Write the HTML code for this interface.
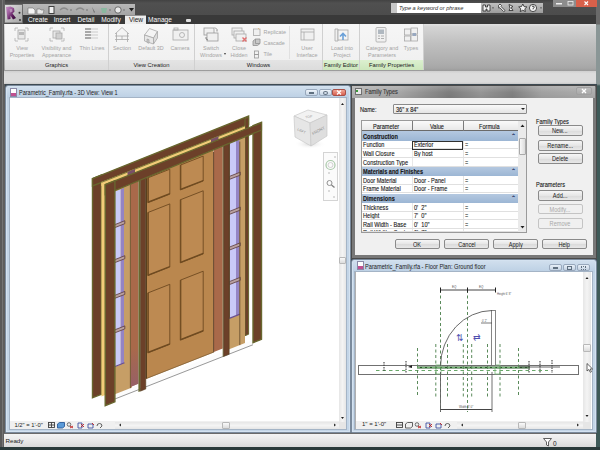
<!DOCTYPE html>
<html><head><meta charset="utf-8">
<style>
*{margin:0;padding:0;box-sizing:border-box}
html,body{width:600px;height:450px;overflow:hidden;background:#3a3a3a;font-family:"Liberation Sans",sans-serif}
.a{position:absolute}
#lstrip{left:0;top:0;width:5px;height:450px;background:linear-gradient(90deg,#5a5a5a 0,#5a5a5a 1.8px,#747474 1.8px,#747474 3.5px,#5e5e5e 3.5px)}
#rstrip{left:596px;top:0;width:4px;height:450px;background:linear-gradient(#6a6a6a 0,#6a6a6a 24px,#8a9696 25px,#8a9696 84px,#3e5a58 86px,#3e5a58 100%)}
#title{left:0;top:0;width:600px;height:15px;background:linear-gradient(#424242,#505050 20%,#4c4c4c)}
#qat{left:23px;top:4px;width:112px;height:11px;background:linear-gradient(#b8b8b8,#a4a4a4)}
#appbtn{left:4px;top:4px;width:19px;height:20px;background:linear-gradient(135deg,#d0d0d0,#8a8a8a);border:1px solid #606060}
#tabs{left:4px;top:15px;width:592px;height:9px;background:#393939}
.tab{position:absolute;top:15px;height:9px;font-size:6.6px;line-height:9.5px;color:#f8f8f8;text-align:center;white-space:nowrap}
#ribbon{left:4px;top:24px;width:592px;height:47px;background:linear-gradient(#e2e2e2 0,#d4d4d4 6%,#c0c0c0 40%,#acacac 85%,#a6a6a6 94%,#9a9a9a 100%)}
.panel{position:absolute;top:24px;height:46px;background:linear-gradient(#f6f6f6,#efefef);border-right:1px solid #d0d0d0}
.plabel{position:absolute;left:0;right:0;top:36px;height:10px;background:linear-gradient(#e4e4e4,#dcdcdc);font-size:5.8px;line-height:10px;text-align:center;color:#202020}
.plabel.g{background:linear-gradient(#dcf0d0,#cce6bc)}
.bl{position:absolute;top:20.5px;font-size:5.4px;line-height:7.3px;color:#a4a4a4;text-align:center;white-space:nowrap}
#strip{left:4px;top:71px;width:592px;height:13px;background:linear-gradient(#cfcfcf,#dcdcdc 20%,#dcdcdc 85%,#c8c8c8)}
#mdi{left:5px;top:84px;width:592px;height:350px;background:#3e4a52}
.win{position:absolute;background:linear-gradient(#d2e0ee,#bcd0e4 12px,#c2d4e6 13px,#c4d6e8);border:1px solid #7a8a9c;border-radius:3px 3px 0 0;box-shadow:inset 0 0 0 1px #d4e2f0}
.wtitle{position:absolute;z-index:1;left:12.5px;top:2px;font-size:7px;line-height:10px;color:#1a1a1a;white-space:nowrap;transform:scaleX(.79);transform-origin:0 0}
.content{position:absolute;background:#fff;box-shadow:0 0 0 1px #a4b4c6}
#status{left:4px;top:433px;width:592px;height:14px;background:linear-gradient(#f4f4f4,#e6e6e6 60%,#dadada);font-size:6.2px;line-height:14.5px;color:#202020;padding-left:1.5px;border-top:1px solid #6a6a6a}
#bottom{left:0;top:447px;width:600px;height:3px;background:#2a3a3a}
</style></head><body>
<div class="a" id="title"></div>
<div class="a" id="lstrip"></div>
<div class="a" id="rstrip"></div>
<div class="a" id="qat"></div>
<div class="a" id="appbtn"></div>
<div class="a" id="tabs"></div>
<div class="a" id="ribbon"></div>

<!-- QAT icons -->
<svg class="a" style="left:0;top:0" width="600" height="26">
  <defs><linearGradient id="ab" x1="0" y1="0" x2="1" y2="1"><stop offset="0" stop-color="#e0e0e0"/><stop offset="1" stop-color="#a4a4a4"/></linearGradient>
  <linearGradient id="rl" x1="0" y1="0" x2="1" y2="1"><stop offset="0" stop-color="#c890c8"/><stop offset=".4" stop-color="#9a5a9a"/><stop offset=".7" stop-color="#5a1a5a"/><stop offset="1" stop-color="#2a0a2a"/></linearGradient></defs>
  <rect x="4.5" y="4.5" width="18" height="18.5" fill="url(#ab)" stroke="#6a6a6a"/>
  <path d="M6 7 L10.5 6.5 L14 8 L14.5 11.5 L12.5 13.5 L16 18 L13 19.5 L10.5 15.5 L10.5 19 L7.5 19.5 Z" fill="url(#rl)"/>
  <path d="M9.5 9 L12 9 L12.5 11.5 L10 12.5 Z" fill="#b890b8"/>
  <circle cx="19.5" cy="12.7" r="1" fill="#383838"/><circle cx="20" cy="20" r="1" fill="#383838"/>
  <path d="M28 8h5l2 2v4h-7z" fill="#f4f4f4" stroke="#707070" stroke-width=".6"/>
  <path d="M37 9h3l1 1h3l-1 4h-6z" fill="#e8e8e8" stroke="#707070" stroke-width=".6"/>
  <rect x="49" y="6.5" width="5" height="7" fill="#f0f0f0" stroke="#404040" stroke-width="1"/>
  <path d="M60 10 q4-4 8 0" fill="none" stroke="#8a8a8a" stroke-width="1.3"/>
  <path d="M76 10 q4-4 8 0" fill="none" stroke="#8a8a8a" stroke-width="1.3"/>
  <circle cx="71" cy="10" r=".7" fill="#606060"/><circle cx="87" cy="10" r=".7" fill="#606060"/>
  <path d="M92 7l3 5-1 1z" fill="#707070"/>
  <path d="M101 8h6l-1 5h-4z" fill="#8ab8a0"/><circle cx="110" cy="10" r=".7" fill="#606060"/>
  <circle cx="118" cy="10" r="3.2" fill="#e8e8e8" stroke="#505050" stroke-width=".8"/><circle cx="124" cy="10" r=".7" fill="#606060"/>
  <path d="M129 8h5l-2.5 3.5z" fill="#202020"/>
  <rect x="125" y="15.5" width="21" height="9" fill="#ececec"/>
  <rect x="186" y="19" width="5" height="3" rx="1" fill="#e0e0e0"/>
</svg>
<div class="tab" style="left:28px;width:20px">Create</div>
<div class="tab" style="left:52px;width:20px">Insert</div>
<div class="tab" style="left:76px;width:20px">Detail</div>
<div class="tab" style="left:101px;width:20px">Modify</div>
<div class="tab" style="left:126px;width:20px;color:#222">View</div>
<div class="tab" style="left:148px;width:24px">Manage</div>
<!-- panels -->
<div class="panel" style="left:5px;width:104px"><div class="plabel">Graphics</div>
 <div class="bl" style="left:2px;width:30px">View<br>Properties</div>
 <div class="bl" style="left:31.5px;width:40px">Visibility and<br>Appearance</div>
 <div class="bl" style="left:72px;width:30px">Thin Lines</div>
</div>
<div class="panel" style="left:109px;width:86px"><div class="plabel">View Creation</div>
 <div class="bl" style="left:0px;width:26px">Section</div>
 <div class="bl" style="left:26px;width:32px">Default 3D</div>
 <div class="bl" style="left:58px;width:26px">Camera</div>
</div>
<div class="panel" style="left:195px;width:128px"><div class="plabel">Windows</div>
 <div class="bl" style="left:2px;width:28px">Switch<br>Windows</div>
 <div class="bl" style="left:32px;width:24px">Close<br>Hidden</div>
 <div class="bl" style="left:68.5px;top:3px;text-align:left;line-height:11.2px">Replicate<br>Cascade<br>Tile</div>
 <div class="a" style="left:29px;top:29px;width:0;height:0;border-left:1.5px solid transparent;border-right:1.5px solid transparent;border-top:2px solid #404040"></div>
 <div class="a" style="left:94px;top:2px;width:1px;height:33px;background:#e0e0e0"></div>
 <div class="bl" style="left:97px;width:30px">User<br>Interface</div>
</div>
<div class="panel" style="left:323px;width:37px"><div class="plabel g">Family Editor</div>
 <div class="bl" style="left:2px;width:34px">Load into<br>Project</div>
</div>
<div class="panel" style="left:360px;width:64px"><div class="plabel g">Family Properties</div>
 <div class="bl" style="left:2px;width:40px">Category and<br>Parameters</div>
 <div class="bl" style="left:40px;width:22px">Types</div>
</div>
<svg class="a" style="left:0;top:24px" width="430" height="36" fill="none" stroke="#a8a8a8" stroke-width=".8">
  <!-- view properties -->
  <path d="M15 7v-3h3M25 4h3v3M28 14v3h-3M18 17h-3v-3" stroke="#b0b0b0"/>
  <rect x="18" y="6" width="7" height="9" fill="#e8e8e8"/><rect x="19" y="8" width="5" height="3" fill="#b8b8b8" stroke="none"/>
  <!-- visibility -->
  <path d="M50 7v-3h3M61 4h3v3M64 14v3h-3M53 17h-3v-3" stroke="#b0b0b0"/>
  <rect x="53" y="7" width="7" height="7" fill="#e8e8e8"/><rect x="56" y="9" width="6" height="6" fill="#d0d0d0"/>
  <!-- thin lines -->
  <path d="M85 5h6M85 8h6M85 11h6M85 14h6" stroke="#909090" stroke-width="1.4"/>
  <path d="M91 5h7M91 8h7M91 11h7M91 14h7" stroke="#c0c0c0"/>
  <!-- section -->
  <path d="M115 10l7-6.5 7 6.5M116.5 9v9M127.5 9v9M115 12h14M115 15.5h14M122 12v3.5" />
  <!-- default 3d -->
  <path d="M144.5 11l5-6.5 8 3-4 6.5z" fill="#f4f4f4"/><path d="M144.5 11v6l9 3v-6z" fill="#e8e8e8"/><path d="M153.5 14l4-6.5v6.5l-4 6z" fill="#dcdcdc"/><path d="M147 15v3.5l2 .7v-3.5z" fill="#c8c8c8"/>
  <!-- camera -->
  <rect x="173" y="6" width="15" height="10" fill="#f0f0f0"/><circle cx="182" cy="11" r="2.5"/><rect x="174" y="4" width="4" height="2"/>
  <!-- switch windows -->
  <rect x="204" y="4" width="10" height="7" fill="#f0f0f0" stroke="#989898"/><rect x="207" y="9" width="11" height="8" fill="#f0f0f0" stroke="#989898"/><path d="M215 3.5l2 2v2M206 13v2l2 1" stroke="#707070"/>
  <!-- close hidden -->
  <rect x="232" y="4" width="10" height="7" fill="#f0f0f0"/><rect x="234" y="7" width="10" height="7" fill="#f0f0f0"/><rect x="236" y="10" width="10" height="7" fill="#f0f0f0"/>
  <path d="M242.5 13.5l4 4M246.5 13.5l-4 4" stroke="#e07070" stroke-width="1.4"/>
  <rect x="253.5" y="5" width="6.5" height="6.5" fill="#f0f0f0"/><path d="M258 4l1.5 1.5" stroke="#e0b070"/>
  <path d="M253 17l2.5-2h4.5v4.5l-2.5 2h-4.5z" fill="#c8c8c8" stroke="#909090"/><path d="M255.5 15v4.5h4.5" stroke="#909090"/>
  <rect x="254.5" y="27" width="4" height="3.5" stroke="#989898"/><rect x="254.5" y="30.5" width="4" height="3.5" stroke="#989898"/>
  <!-- UI -->
  <rect x="301" y="5" width="13" height="11" fill="#f0f0f0"/><path d="M301 8h13M304 8v8"/>
  <!-- load into project -->
  <path d="M335 5h3v12h-3z" fill="#f0f0f0"/><rect x="338" y="6" width="10" height="10" fill="#f4f4f4"/><path d="M343 16v-6M340 12.5l3-3 3 3" stroke="#6aa0d8" stroke-width="1.6"/>
  <!-- category -->
  <rect x="376" y="3.5" width="10" height="14.5" rx="1" fill="#f0f0f0"/><rect x="378" y="5.5" width="6" height="4.5" fill="#b0b8c0" stroke="none"/><path d="M378 12h2M381 12h3M378 14.5h2M381 14.5h3" stroke="#a0a0a0"/>
  <!-- types -->
  <rect x="404.5" y="5" width="6" height="6" fill="#f0f0f0"/><rect x="404.5" y="12" width="6" height="5" fill="#f0f0f0"/><rect x="411" y="4" width="6.5" height="6" fill="#f0f0f0"/><rect x="411" y="11" width="6.5" height="6" fill="#f0f0f0"/><rect x="412.5" y="9" width="3.5" height="3" fill="#98a8c0" stroke="none"/>
</svg>
<!-- search -->
<div class="a" style="left:391px;top:3px;width:6px;height:10px;background:#c8c8c8"></div>
<div class="a" style="left:397px;top:3px;width:84px;height:10px;background:#fff;font-size:5.6px;line-height:10px;font-style:italic;color:#303030;padding-left:2px">Type a keyword or phrase</div>
<div class="a" style="left:481px;top:3px;width:62px;height:10px;background:linear-gradient(#c0c0c0,#9c9c9c)"></div>
<svg class="a" style="left:480px;top:0px" width="120" height="16" stroke="#2a2a2a" stroke-width=".8">
  <path d="M3 5h2.5v2h2v-2h2.5v6h-3v-2h-1v2h-3z" fill="#f0f0f0"/>
  <path d="M12 7.5h2l-1 1.2z" fill="#303030" stroke="none"/>
  <path d="M18.5 5.5l1.5-1.5 1.5 1.5-.5 1 4 4-1.2 1.2-4-4-1 .5z" fill="#f4f4f4"/>
  <path d="M29 4.5l4 2-2 1 2 3h-4l1-2z" fill="#f0f0f0"/>
  <path d="M42.8 4l1.3 2.6 2.8.3-2.1 1.9.6 2.8-2.6-1.4-2.6 1.4.6-2.8-2.1-1.9 2.8-.3z" fill="#f4f4f4"/>
  <circle cx="53" cy="8" r="3.6" fill="#f4f4f4"/><path d="M52 6.5q1-1 2 0t-1 2v.8" fill="none" stroke-width=".9"/>
  <path d="M60 7.5h2l-1 1.2z" fill="#303030" stroke="none"/>
  <rect x="73" y="0" width="12" height="7" fill="#8c8c8c" stroke="none"/><rect x="76" y="3" width="6" height="1.5" fill="#f0f0f0" stroke="none"/>
  <rect x="85" y="0" width="11" height="7" fill="#8c8c8c" stroke="none"/><rect x="88" y="1.5" width="5" height="3.5" fill="none" stroke="#f0f0f0"/>
  <rect x="96" y="0" width="21" height="7" fill="#d8604a" stroke="none"/><path d="M104.5 1.5l3.5 3.5M108 1.5l-3.5 3.5" stroke="#fff" stroke-width="1.1"/>
</svg>
<div class="a" id="strip"></div>
<div class="a" id="mdi"></div>
<!-- 3D window -->
<div class="win" style="left:5px;top:85px;width:345.5px;height:348px">
  <div class="wtitle">Parametric_Family.rfa - 3D View: View 1</div>
  <div class="content" style="left:4px;top:12px;width:336px;height:331px"></div>
</div>
<svg class="a" style="left:0;top:0" width="350" height="450"><polygon points="114.00,394.55 253.00,339.92 253.00,344.72 114.00,399.35" fill="#fcfcfc"/><line x1="113.00" y1="399.74" x2="253.00" y2="344.72" stroke="#8c8c8c" stroke-width="0.9"/><polygon points="92.50,178.60 101.40,175.10 101.40,394.30 92.50,397.80" fill="#6c4029" stroke="#68662e" stroke-width="1.4" stroke-linejoin="miter"/><polygon points="92.5,178.6 248.6,116.0 248.6,124.65 92.5,186.0" fill="#6c4029" stroke="#68662e" stroke-width="1.4"/><polygon points="245.00,118.67 248.60,117.25 248.60,334.25 245.00,335.67" fill="#6c4029" stroke="#68662e" stroke-width="1.0" stroke-linejoin="miter"/><polygon points="101.40,182.50 105.20,181.01 105.20,395.01 101.40,396.50" fill="#f2cc78"/><polygon points="101.40,182.10 245.00,125.67 245.00,129.67 101.40,186.10" fill="#f2cc78"/><line x1="101.40" y1="182.40" x2="245.00" y2="125.97" stroke="#68662e" stroke-width="0.8"/><polygon points="127.50,172.05 135.00,169.10 135.00,172.90 127.50,175.84" fill="#7a5068"/><polygon points="211.00,139.23 218.50,136.28 218.50,140.08 211.00,143.03" fill="#7a5068"/><polygon points="114.90,187.20 132.00,180.48 132.00,387.48 114.90,394.20" fill="#c69e66"/><polygon points="228.00,142.75 245.00,136.07 245.00,343.07 228.00,349.75" fill="#c69e66"/><polygon points="114.90,191.50 120.80,189.18 120.80,364.38 114.90,366.70" fill="#c9c9f7"/><polygon points="120.80,189.18 124.00,187.92 124.00,363.12 120.80,364.38" fill="#9484c4"/><polygon points="114.40,224.79 124.80,220.71 124.80,223.71 114.40,227.79" fill="#b8a0a0" stroke="#5a3a3a" stroke-width="0.8" stroke-linejoin="miter"/><polygon points="114.40,259.79 124.80,255.71 124.80,258.71 114.40,262.79" fill="#b8a0a0" stroke="#5a3a3a" stroke-width="0.8" stroke-linejoin="miter"/><polygon points="114.40,295.49 124.80,291.41 124.80,294.41 114.40,298.49" fill="#b8a0a0" stroke="#5a3a3a" stroke-width="0.8" stroke-linejoin="miter"/><polygon points="114.40,329.99 124.80,325.91 124.80,328.91 114.40,332.99" fill="#b8a0a0" stroke="#5a3a3a" stroke-width="0.8" stroke-linejoin="miter"/><line x1="114.50" y1="191.65" x2="114.50" y2="366.85" stroke="#5a4a3a" stroke-width="0.9"/><line x1="114.40" y1="366.69" x2="124.50" y2="362.72" stroke="#6a5090" stroke-width="1.2"/><polygon points="229.80,143.14 236.00,140.70 236.00,315.90 229.80,318.34" fill="#c9c9f7"/><polygon points="236.00,140.70 239.50,139.33 239.50,314.53 236.00,315.90" fill="#9484c4"/><polygon points="229.30,176.44 240.30,172.11 240.30,175.11 229.30,179.44" fill="#b8a0a0" stroke="#5a3a3a" stroke-width="0.8" stroke-linejoin="miter"/><polygon points="229.30,211.44 240.30,207.11 240.30,210.11 229.30,214.44" fill="#b8a0a0" stroke="#5a3a3a" stroke-width="0.8" stroke-linejoin="miter"/><polygon points="229.30,247.14 240.30,242.81 240.30,245.81 229.30,250.14" fill="#b8a0a0" stroke="#5a3a3a" stroke-width="0.8" stroke-linejoin="miter"/><polygon points="229.30,281.64 240.30,277.31 240.30,280.31 229.30,284.64" fill="#b8a0a0" stroke="#5a3a3a" stroke-width="0.8" stroke-linejoin="miter"/><line x1="229.40" y1="143.30" x2="229.40" y2="318.50" stroke="#5a4a3a" stroke-width="0.9"/><line x1="229.30" y1="318.34" x2="240.00" y2="314.13" stroke="#6a5090" stroke-width="1.2"/><line x1="130.40" y1="184.61" x2="130.40" y2="388.11" stroke="#6a5030" stroke-width="0.9"/><line x1="239.80" y1="141.61" x2="239.80" y2="345.11" stroke="#6a5030" stroke-width="0.9"/><polygon points="146.00,175.97 213.50,149.45 213.50,352.45 146.00,378.97" fill="#ba874e"/><polygon points="147.80,177.87 169.80,169.22 169.80,194.12 147.80,202.77" fill="#bd8a52" stroke="#6e4a20" stroke-width="0.9" stroke-linejoin="miter"/><line x1="148.00" y1="202.19" x2="169.80" y2="193.62" stroke="#6e4a20" stroke-width="1.3"/><line x1="148.30" y1="177.67" x2="148.30" y2="202.57" stroke="#6e4a20" stroke-width="1.1"/><polygon points="147.80,212.57 169.80,203.92 169.80,267.02 147.80,275.67" fill="#bd8a52" stroke="#6e4a20" stroke-width="0.9" stroke-linejoin="miter"/><line x1="148.00" y1="275.09" x2="169.80" y2="266.52" stroke="#6e4a20" stroke-width="1.3"/><line x1="148.30" y1="212.37" x2="148.30" y2="275.47" stroke="#6e4a20" stroke-width="1.1"/><polygon points="147.80,292.97 169.80,284.32 169.80,344.32 147.80,352.97" fill="#bd8a52" stroke="#6e4a20" stroke-width="0.9" stroke-linejoin="miter"/><line x1="148.00" y1="352.39" x2="169.80" y2="343.82" stroke="#6e4a20" stroke-width="1.3"/><line x1="148.30" y1="292.77" x2="148.30" y2="352.77" stroke="#6e4a20" stroke-width="1.1"/><polygon points="180.30,165.09 203.20,156.09 203.20,180.99 180.30,189.99" fill="#bd8a52" stroke="#6e4a20" stroke-width="0.9" stroke-linejoin="miter"/><line x1="180.50" y1="189.42" x2="203.20" y2="180.49" stroke="#6e4a20" stroke-width="1.3"/><line x1="180.80" y1="164.90" x2="180.80" y2="189.80" stroke="#6e4a20" stroke-width="1.1"/><polygon points="180.30,199.79 203.20,190.79 203.20,253.89 180.30,262.89" fill="#bd8a52" stroke="#6e4a20" stroke-width="0.9" stroke-linejoin="miter"/><line x1="180.50" y1="262.32" x2="203.20" y2="253.39" stroke="#6e4a20" stroke-width="1.3"/><line x1="180.80" y1="199.60" x2="180.80" y2="262.70" stroke="#6e4a20" stroke-width="1.1"/><polygon points="180.30,280.19 203.20,271.19 203.20,331.19 180.30,340.19" fill="#bd8a52" stroke="#6e4a20" stroke-width="0.9" stroke-linejoin="miter"/><line x1="180.50" y1="339.62" x2="203.20" y2="330.69" stroke="#6e4a20" stroke-width="1.3"/><line x1="180.80" y1="280.00" x2="180.80" y2="340.00" stroke="#6e4a20" stroke-width="1.1"/><polygon points="131.00,181.87 138.40,178.96 138.40,383.76 131.00,386.67" fill="#a9694a"/><polygon points="138.40,178.96 140.50,178.14 140.50,391.14 138.40,391.96" fill="#68662e"/><polygon points="140.50,178.14 145.80,176.05 145.80,389.05 140.50,391.14" fill="#6c4029" stroke="#4e3a1c" stroke-width="0.5" stroke-linejoin="miter"/><polygon points="213.80,149.33 222.70,145.83 222.70,348.53 213.80,352.03" fill="#a9694a"/><polygon points="222.70,145.83 223.60,145.48 223.60,356.48 222.70,356.83" fill="#68662e"/><polygon points="223.60,145.48 229.20,143.28 229.20,354.28 223.60,356.48" fill="#6c4029" stroke="#4e3a1c" stroke-width="0.5" stroke-linejoin="miter"/><polygon points="253.00,125.72 261.50,122.38 261.50,339.38 253.00,342.72" fill="#6c4029" stroke="#68662e" stroke-width="1.4" stroke-linejoin="miter"/><polygon points="105.2,184.6 261.5,122.8 261.5,130.0 105.2,194.5" fill="#6c4029" stroke="#68662e" stroke-width="1.2"/><polygon points="105.20,184.61 114.90,180.80 114.90,401.80 105.20,405.61" fill="#6c4029" stroke="#68662e" stroke-width="1.4" stroke-linejoin="miter"/><defs><linearGradient id="pt" x1="0" y1="0" x2="0" y2="1"><stop offset="0" stop-color="#8a5a7a" stop-opacity="0"/><stop offset="1" stop-color="#8a5a7a" stop-opacity=".6"/></linearGradient></defs><polygon points="131.00,349.87 138.40,346.96 138.40,383.76 131.00,386.67" fill="url(#pt)"/><line x1="146.30" y1="378.86" x2="146.30" y2="178.36" stroke="#4a3418" stroke-width="1.1"/><line x1="213.60" y1="352.41" x2="213.60" y2="151.91" stroke="#5a3c20" stroke-width="0.9"/><line x1="146.00" y1="378.67" x2="213.50" y2="352.15" stroke="#7a5a30" stroke-width="0.7"/></svg>
<div class="a" style="left:10px;top:88px;width:7px;height:9px;background:#fff;border:1px solid #8a8aa8"></div>
<div class="a" style="left:11px;top:93px;width:5px;height:3px;background:#c05090"></div>
<div class="a" style="left:305px;top:89px;width:13px;height:7px;border-radius:2px;background:linear-gradient(#eef4fa,#c8d6e6);border:1px solid #98a8bc"></div>
<div class="a" style="left:309px;top:92px;width:5px;height:2px;background:#fff;border:1px solid #607080"></div>
<div class="a" style="left:319px;top:89px;width:13px;height:7px;border-radius:2px;background:linear-gradient(#eef4fa,#c8d6e6);border:1px solid #98a8bc"></div>
<div class="a" style="left:323px;top:90.5px;width:5px;height:4px;border-radius:50%;border:1px solid #607080"></div>
<div class="a" style="left:332px;top:89px;width:14px;height:7px;border-radius:2px;background:linear-gradient(#f0a898,#d86050);border:1px solid #a85048"></div>
<svg class="a" style="left:332px;top:89px" width="14" height="8"><path d="M5 1.5l4 4M9 1.5l-4 4" stroke="#fff" stroke-width="1.3"/></svg>
<!-- scrollbars -->
<div class="a" style="left:339px;top:98px;width:7px;height:324px;background:linear-gradient(90deg,#e6e6e6,#f4f4f4,#e6e6e6)"></div>
<div class="a" style="left:339px;top:257px;width:7px;height:7px;background:linear-gradient(#fafafa,#dcdcdc);border:1px solid #b8b8b8;border-radius:1px"></div>
<svg class="a" style="left:339px;top:99px" width="7" height="324"><path d="M2 6h3l-1.5-2z" fill="#202020"/><path d="M2 318h3l-1.5 2z" fill="#202020"/></svg>
<div class="a" style="left:10px;top:421px;width:329px;height:8px;background:#f0f0f0"></div>
<div class="a" style="left:115px;top:422px;width:224px;height:7px;background:linear-gradient(#e6e6e6,#f4f4f4,#e6e6e6)"></div>
<div class="a" style="left:222px;top:422px;width:8px;height:7px;background:linear-gradient(#fafafa,#dcdcdc);border:1px solid #b8b8b8;border-radius:1px"></div>
<svg class="a" style="left:110px;top:421px" width="230" height="8"><path d="M9 4l2-1.5v3z" fill="#303030"/><path d="M224 2.5v3l2-1.5z" fill="#303030"/></svg>
<div class="a" style="left:14.5px;top:421px;font-size:5.8px;line-height:9px;color:#202020;white-space:nowrap">1/2" = 1'-0"</div>
<svg class="a" style="left:46px;top:421px" width="60" height="8" stroke-width=".9" fill="none">
  <rect x="2.5" y="1.5" width="6" height="5" stroke="#404040"/><path d="M2.5 4h6M5.5 1.5v5" stroke="#404040"/>
  <path d="M11.5 3l2-1.5h5v4l-2 1.5h-5z" fill="#5a9ad8" stroke="#2a5a98"/>
  <circle cx="23" cy="3.5" r="1.8" stroke="#606060"/><path d="M24 5l3 2M27 5l-3 2" stroke="#c02020"/>
  <path d="M32 2h4v5h-4z" stroke="#4050a0"/><path d="M35 3l3 3M38 3l-3 3" stroke="#c02020"/>
  <path d="M42 3h5v4h-5z" stroke="#4050a0"/><path d="M46 2l2 2" stroke="#c02020"/>
  <path d="M51 5a2.5 2.5 0 1 1 5 0l-2 2" stroke="#505050"/>
</svg>
<!-- viewcube -->
<svg class="a" style="left:288px;top:104px" width="48" height="48">
  <defs><radialGradient id="cs" cx=".5" cy=".5" r=".5"><stop offset="0" stop-color="#d8d8d8"/><stop offset="1" stop-color="#fff" stop-opacity="0"/></radialGradient></defs>
  <ellipse cx="22" cy="40" rx="16" ry="5" fill="url(#cs)"/>
  <path d="M6 12 L20 6 L39 11 L22 19 Z" fill="#f2f2f2" stroke="#c8c8c8" stroke-width=".7"/>
  <path d="M6 12 L22 19 L23 42 L7 33 Z" fill="#e6e6e6" stroke="#c8c8c8" stroke-width=".7"/>
  <path d="M22 19 L39 11 L39 32 L23 42 Z" fill="#dedede" stroke="#c8c8c8" stroke-width=".7"/>
  <text x="21" y="14" font-size="3.5" fill="#9a9a9a" text-anchor="middle" transform="rotate(-10 21 14)">TOP</text>
  <text x="13" y="28" font-size="3.5" fill="#8a8a8a" text-anchor="middle" transform="rotate(25 13 28)">LEFT</text>
  <text x="31" y="28" font-size="4" fill="#8a8a8a" text-anchor="middle" transform="rotate(-28 31 28)">FRONT</text>
</svg>
<!-- nav bar -->
<div class="a" style="left:323px;top:152px;width:15px;height:49px;border:1px solid #d4d4d4;background:#fbfbfb"></div>
<svg class="a" style="left:323px;top:152px" width="15" height="50" fill="none">
  <circle cx="7.5" cy="13" r="4.5" stroke="#a8c8a8" stroke-width="1.2"/><circle cx="7.5" cy="13" r="2.5" stroke="#c8c8c8" stroke-width=".8"/>
  <circle cx="12" cy="5" r=".7" fill="#a0a0a0"/><circle cx="6" cy="21" r=".7" fill="#a0a0a0"/>
  <circle cx="6.5" cy="31" r="2.5" stroke="#909090" stroke-width="1"/><path d="M8.5 33l3 2.5" stroke="#808080" stroke-width="1.3"/>
  <circle cx="6" cy="39" r=".7" fill="#a0a0a0"/><circle cx="11" cy="45" r=".7" fill="#a0a0a0"/>
</svg>
<div class="a" style="left:339px;top:422px;width:7px;height:7px;background:#e6e6e6"></div>

<!-- dialog -->
<div class="a" style="left:351px;top:84.5px;width:245.5px;height:174px;background:#787878;border:1px solid #4a4a4a;border-radius:2px 2px 0 0">
  <div class="a" style="left:3px;top:12.5px;width:237.5px;height:157px;background:#f0f0f0"></div>
</div>
<style>
.dt{position:absolute;font-size:7px;line-height:9px;color:#101010;white-space:nowrap;transform:scaleX(.8);transform-origin:0 0;-webkit-text-stroke:.12px #303030}
.db{position:absolute;height:11px;border:1px solid #8a8a8a;border-radius:2px;background:linear-gradient(#f6f6f6,#e6e6e6 50%,#dadada 51%,#e8e8e8);font-size:7px;line-height:9px;text-align:center;color:#1a1a1a}
.db span{display:inline-block;transform:scaleX(.8)}
.db.dis{color:#a8a8a8;border-color:#c4c4c4;background:#f0f0f0}
</style>
<div class="a" style="left:352px;top:85.5px;width:243px;height:12.5px;background:linear-gradient(rgba(255,255,255,.18),rgba(255,255,255,0) 50%,rgba(0,0,0,.05)),linear-gradient(90deg,#b2b2b2 0,#a6a6a6 20%,#7e7e7e 40%,#969696 53%,#828282 66%,#a2a2a2 78%,#adadad 100%)"></div>
<div class="a" style="left:355px;top:88px;width:7px;height:7px;background:#e8e8e8;border:1px solid #707070"></div>
<div class="a" style="left:356px;top:90px;width:2px;height:2px;background:#3a9a3a"></div>
<div class="dt" style="left:365px;top:87px;color:#3a3a3a">Family Types</div>
<div class="a" style="left:576px;top:87px;width:16px;height:8px;border-radius:2px;background:linear-gradient(#bcbcbc,#a8a8a8);border:1px solid #a0a0a0"></div>
<svg class="a" style="left:576px;top:87px" width="16" height="9"><path d="M6 2l4 4M10 2l-4 4" stroke="#fff" stroke-width="1.4"/></svg>
<div class="a" style="left:355px;top:98px;width:237px;height:156px;background:#f0f0f0"></div>
<div class="dt" style="left:360px;top:104.5px">Name:</div>
<div class="a" style="left:393px;top:104px;width:134px;height:10px;background:linear-gradient(#fafafa,#e4e4e4);border:1px solid #8a8a8a;border-radius:1px"></div>
<div class="dt" style="left:396px;top:104.5px">36" x 84"</div>
<svg class="a" style="left:519px;top:105px" width="8" height="8"><path d="M2 3h4l-2 2z" fill="#202020"/></svg>
<div class="a" style="left:361px;top:120px;width:166px;height:113px;background:#fff;border:1px solid #9a9a9a"></div>
<div class="a" style="left:362px;top:121px;width:156px;height:10px;background:linear-gradient(#fafafa,#e8e8e8);border-bottom:1px solid #6a6a6a"></div>
<div class="a" style="left:411.5px;top:121px;width:1px;height:10px;background:#7a7a7a"></div>
<div class="a" style="left:462.5px;top:121px;width:1px;height:10px;background:#7a7a7a"></div>
<div class="a" style="left:517.5px;top:121px;width:1px;height:10px;background:#7a7a7a"></div>
<div class="dt" style="left:373px;top:121.5px">Parameter</div>
<div class="dt" style="left:430px;top:121.5px">Value</div>
<div class="dt" style="left:479px;top:121.5px">Formula</div>
<div class="a" style="left:518px;top:121px;width:8px;height:111px;background:#eaeaea"></div>
<div class="a" style="left:519px;top:138px;width:7px;height:17px;background:linear-gradient(90deg,#f8f8f8,#dcdcdc);border:1px solid #aaa;border-radius:1px"></div>
<svg class="a" style="left:518px;top:121px" width="9" height="112"><path d="M2.5 6h4l-2-2.5z" fill="#202020"/><path d="M2.5 105h4l-2 2.5z" fill="#202020"/></svg>
<div class="a" style="left:362px;top:131.3px;width:156px;height:9.6px;background:linear-gradient(#b4c8e0,#9cb6d4);overflow:hidden"><div class="dt" style="left:1px;top:0.3px;font-weight:bold">Construction</div></div>
<div class="a" style="left:511px;top:132.8px;font-size:6px;line-height:6px;color:#203060;font-weight:bold">&#8963;</div>
<div class="a" style="left:362px;top:140.9px;width:156px;height:8.6px;border-bottom:1px solid #e0e0e0;overflow:hidden"><div class="dt" style="left:1px;top:-0.5px">Function</div><div class="dt" style="left:52px;top:-0.5px">Exterior</div><div class="dt" style="left:103px;top:-0.5px">=</div><div class="a" style="left:49.5px;top:0;width:1px;height:9px;background:#e8e8e8"></div><div class="a" style="left:100.5px;top:0;width:1px;height:9px;background:#e4e4e4"></div></div>
<div class="a" style="left:362px;top:149.5px;width:156px;height:8.6px;border-bottom:1px solid #e0e0e0;overflow:hidden"><div class="dt" style="left:1px;top:-0.5px">Wall Closure</div><div class="dt" style="left:52px;top:-0.5px">By host</div><div class="dt" style="left:103px;top:-0.5px">=</div><div class="a" style="left:49.5px;top:0;width:1px;height:9px;background:#e8e8e8"></div><div class="a" style="left:100.5px;top:0;width:1px;height:9px;background:#e4e4e4"></div></div>
<div class="a" style="left:362px;top:158.1px;width:156px;height:8.6px;border-bottom:1px solid #e0e0e0;overflow:hidden"><div class="dt" style="left:1px;top:-0.5px">Construction Type</div><div class="dt" style="left:52px;top:-0.5px"></div><div class="dt" style="left:103px;top:-0.5px">=</div><div class="a" style="left:49.5px;top:0;width:1px;height:9px;background:#e8e8e8"></div><div class="a" style="left:100.5px;top:0;width:1px;height:9px;background:#e4e4e4"></div></div>
<div class="a" style="left:362px;top:166.7px;width:156px;height:9.6px;background:linear-gradient(#b4c8e0,#9cb6d4);overflow:hidden"><div class="dt" style="left:1px;top:0.3px;font-weight:bold">Materials and Finishes</div></div>
<div class="a" style="left:511px;top:168.2px;font-size:6px;line-height:6px;color:#203060;font-weight:bold">&#8963;</div>
<div class="a" style="left:362px;top:176.29999999999998px;width:156px;height:8.6px;border-bottom:1px solid #e0e0e0;overflow:hidden"><div class="dt" style="left:1px;top:-0.5px">Door Material</div><div class="dt" style="left:52px;top:-0.5px">Door - Panel</div><div class="dt" style="left:103px;top:-0.5px">=</div><div class="a" style="left:49.5px;top:0;width:1px;height:9px;background:#e8e8e8"></div><div class="a" style="left:100.5px;top:0;width:1px;height:9px;background:#e4e4e4"></div></div>
<div class="a" style="left:362px;top:184.89999999999998px;width:156px;height:8.6px;border-bottom:1px solid #e0e0e0;overflow:hidden"><div class="dt" style="left:1px;top:-0.5px">Frame Material</div><div class="dt" style="left:52px;top:-0.5px">Door - Frame</div><div class="dt" style="left:103px;top:-0.5px">=</div><div class="a" style="left:49.5px;top:0;width:1px;height:9px;background:#e8e8e8"></div><div class="a" style="left:100.5px;top:0;width:1px;height:9px;background:#e4e4e4"></div></div>
<div class="a" style="left:362px;top:193.49999999999997px;width:156px;height:9.6px;background:linear-gradient(#b4c8e0,#9cb6d4);overflow:hidden"><div class="dt" style="left:1px;top:0.3px;font-weight:bold">Dimensions</div></div>
<div class="a" style="left:511px;top:194.99999999999997px;font-size:6px;line-height:6px;color:#203060;font-weight:bold">&#8963;</div>
<div class="a" style="left:362px;top:203.09999999999997px;width:156px;height:8.6px;border-bottom:1px solid #e0e0e0;overflow:hidden"><div class="dt" style="left:1px;top:-0.5px">Thickness</div><div class="dt" style="left:52px;top:-0.5px">0'&nbsp; 2"</div><div class="dt" style="left:103px;top:-0.5px">=</div><div class="a" style="left:49.5px;top:0;width:1px;height:9px;background:#e8e8e8"></div><div class="a" style="left:100.5px;top:0;width:1px;height:9px;background:#e4e4e4"></div></div>
<div class="a" style="left:362px;top:211.69999999999996px;width:156px;height:8.6px;border-bottom:1px solid #e0e0e0;overflow:hidden"><div class="dt" style="left:1px;top:-0.5px">Height</div><div class="dt" style="left:52px;top:-0.5px">7'&nbsp; 0"</div><div class="dt" style="left:103px;top:-0.5px">=</div><div class="a" style="left:49.5px;top:0;width:1px;height:9px;background:#e8e8e8"></div><div class="a" style="left:100.5px;top:0;width:1px;height:9px;background:#e4e4e4"></div></div>
<div class="a" style="left:362px;top:220.29999999999995px;width:156px;height:8.6px;border-bottom:1px solid #e0e0e0;overflow:hidden"><div class="dt" style="left:1px;top:-0.5px">Rail Width - Base</div><div class="dt" style="left:52px;top:-0.5px">0'&nbsp; 10"</div><div class="dt" style="left:103px;top:-0.5px">=</div><div class="a" style="left:49.5px;top:0;width:1px;height:9px;background:#e8e8e8"></div><div class="a" style="left:100.5px;top:0;width:1px;height:9px;background:#e4e4e4"></div></div>
<div class="a" style="left:362px;top:228.89999999999995px;width:156px;height:3.100000000000051px;border-bottom:1px solid #e0e0e0;overflow:hidden"><div class="dt" style="left:1px;top:-0.5px">Rail Width - Center</div><div class="dt" style="left:52px;top:-0.5px">0'&nbsp; 7"</div><div class="dt" style="left:103px;top:-0.5px">=</div><div class="a" style="left:49.5px;top:0;width:1px;height:9px;background:#e8e8e8"></div><div class="a" style="left:100.5px;top:0;width:1px;height:9px;background:#e4e4e4"></div></div>
<div class="a" style="left:412px;top:140.9px;width:51px;height:8.8px;border:1px solid #303030"></div>
<div class="dt" style="left:536px;top:116.5px">Family Types</div>
<div class="db" style="left:537.5px;top:125px;width:45px;height:10.5px"><span>New...</span></div>
<div class="db" style="left:537.5px;top:140px;width:45px;height:10.5px"><span>Rename...</span></div>
<div class="db" style="left:537.5px;top:153px;width:45px;height:10.5px"><span>Delete</span></div>
<div class="dt" style="left:536px;top:179.5px">Parameters</div>
<div class="db" style="left:537.5px;top:190px;width:45px;height:10.5px"><span>Add...</span></div>
<div class="db dis" style="left:537.5px;top:203.5px;width:45px;height:10.5px"><span>Modify...</span></div>
<div class="db dis" style="left:537.5px;top:218px;width:45px;height:10.5px"><span>Remove</span></div>
<div class="db" style="left:395px;top:238.5px;width:45px;height:10.5px"><span>OK</span></div>
<div class="db" style="left:444px;top:238.5px;width:45px;height:10.5px"><span>Cancel</span></div>
<div class="db" style="left:493px;top:238.5px;width:45px;height:10.5px"><span>Apply</span></div>
<div class="db" style="left:542px;top:238.5px;width:45px;height:10.5px"><span>Help</span></div>
<!-- floor plan window -->
<div class="win" style="left:351px;top:258.5px;width:245.5px;height:174.5px">
  <div class="wtitle" style="left:12.5px;transform:scaleX(.81)">Parametric_Family.rfa - Floor Plan: Ground floor</div>
  <div class="content" style="left:3px;top:12.5px;width:236.5px;height:157px;border-left:1px solid #b0b0b0"></div>
</div>
<div class="a" style="left:549px;top:264px;width:13px;height:7px;border-radius:2px;background:linear-gradient(#e8f0f8,#c4d2e2);border:1px solid #98a8bc"></div>
<div class="a" style="left:563px;top:264px;width:13px;height:7px;border-radius:2px;background:linear-gradient(#e8f0f8,#c4d2e2);border:1px solid #98a8bc"></div>
<div class="a" style="left:577px;top:264px;width:13px;height:7px;border-radius:2px;background:linear-gradient(#e8f0f8,#c4d2e2);border:1px solid #98a8bc"></div>
<div class="a" style="left:553px;top:266.5px;width:5px;height:2px;border:1px solid #607080"></div>
<div class="a" style="left:567px;top:265.5px;width:5px;height:4px;border:1px solid #607080"></div>
<div class="a" style="left:581px;top:265.5px;width:5px;height:4px;border:1px dotted #607080"></div>
<div class="a" style="left:357px;top:261px;width:7px;height:9px;background:#fff;border:1px solid #8a8aa8"></div>
<div class="a" style="left:358px;top:266px;width:5px;height:3px;background:#c05090"></div>
<div class="a" style="left:583px;top:272px;width:8px;height:150px;background:linear-gradient(90deg,#e6e6e6,#f4f4f4,#e6e6e6)"></div>
<div class="a" style="left:583px;top:344px;width:8px;height:8px;background:linear-gradient(#fafafa,#dcdcdc);border:1px solid #b8b8b8;border-radius:1px"></div>
<svg class="a" style="left:583px;top:272px" width="8" height="150"><path d="M2.5 7h3l-1.5-2z" fill="#202020"/><path d="M2.5 143h3l-1.5 2z" fill="#202020"/></svg>
<div class="a" style="left:356px;top:421px;width:227px;height:8px;background:#f0f0f0"></div>
<div class="a" style="left:457px;top:422px;width:126px;height:7px;background:linear-gradient(#e6e6e6,#f4f4f4,#e6e6e6)"></div>
<div class="a" style="left:518px;top:422px;width:8px;height:7px;background:linear-gradient(#fafafa,#dcdcdc);border:1px solid #b8b8b8;border-radius:1px"></div>
<svg class="a" style="left:455px;top:421px" width="130" height="8"><path d="M6 4l2-1.5v3z" fill="#303030"/><path d="M122 2.5v3l2-1.5z" fill="#303030"/></svg>
<div class="a" style="left:362px;top:420px;font-size:6px;line-height:9px;color:#202020;white-space:nowrap">1" = 1'-0"</div>
<svg class="a" style="left:394px;top:421px" width="60" height="8" stroke-width=".9" fill="none">
  <rect x="2.5" y="1.5" width="6" height="5" stroke="#404040"/><path d="M2.5 4h6" stroke="#404040"/>
  <path d="M11.5 3l2-1.5h5v4l-2 1.5h-5z" stroke="#505050"/>
  <circle cx="23" cy="3.5" r="1.8" stroke="#606060"/><path d="M24 5l3 2M27 5l-3 2" stroke="#c02020"/>
  <path d="M32 2h4v5h-4z" stroke="#4050a0"/><path d="M35 3l3 3M38 3l-3 3" stroke="#c02020"/>
  <path d="M42 3h5v4h-5z" stroke="#4050a0"/><path d="M46 2l2 2" stroke="#c02020"/>
  <path d="M51 5a2.5 2.5 0 1 1 5 0l-2 2" stroke="#505050"/>
</svg>
<div class="a" style="left:583px;top:422px;width:8px;height:7px;background:#e6e6e6"></div>
<svg class="a" style="left:0;top:0" width="600" height="450"><rect x="358.5" y="365.5" width="220" height="9" fill="#fff" stroke="#707070" stroke-width="1"/><line x1="376" y1="370.5" x2="548" y2="370.5" stroke="#6aa86a" stroke-width="1" stroke-dasharray="3.5 3"/><path d="M417 367.5 H530" stroke="#2a5a2a" stroke-width="2.2"/><path d="M417 367.5 H530" stroke="#8ad08a" stroke-width=".8" stroke-dasharray="3 2"/><rect x="436" y="365" width="5" height="9" fill="none" stroke="#7ab87a" stroke-width=".8"/><rect x="495" y="365" width="5" height="9" fill="none" stroke="#7ab87a" stroke-width=".8"/><line x1="440.5" y1="290" x2="440.5" y2="412" stroke="#5a8a5a" stroke-width="1" stroke-dasharray="3 2.5"/><line x1="467.5" y1="290" x2="467.5" y2="412" stroke="#5a8a5a" stroke-width="1" stroke-dasharray="3 2.5"/><line x1="417.5" y1="348" x2="417.5" y2="396" stroke="#5a8a5a" stroke-width="1" stroke-dasharray="3 2.5"/><line x1="518.5" y1="348" x2="518.5" y2="396" stroke="#5a8a5a" stroke-width="1" stroke-dasharray="3 2.5"/><line x1="435.8" y1="344" x2="435.8" y2="398" stroke="#5a8a5a" stroke-width="1" stroke-dasharray="3 2.5"/><line x1="447.5" y1="344" x2="447.5" y2="398" stroke="#5a8a5a" stroke-width="1" stroke-dasharray="3 2.5"/><line x1="463.3" y1="344" x2="463.3" y2="398" stroke="#5a8a5a" stroke-width="1" stroke-dasharray="3 2.5"/><line x1="471.7" y1="344" x2="471.7" y2="398" stroke="#5a8a5a" stroke-width="1" stroke-dasharray="3 2.5"/><line x1="487.5" y1="344" x2="487.5" y2="398" stroke="#5a8a5a" stroke-width="1" stroke-dasharray="3 2.5"/><line x1="500" y1="344" x2="500" y2="398" stroke="#5a8a5a" stroke-width="1" stroke-dasharray="3 2.5"/><rect x="491.5" y="310.5" width="4" height="55" fill="#fff" stroke="#686868" stroke-width=".8"/><line x1="440.5" y1="372" x2="440.5" y2="412" stroke="#606060" stroke-width=".9"/><path d="M440.5 366 A 52 56 0 0 1 492 310.5" fill="none" stroke="#585858" stroke-width=".9"/><path d="M440.5 290 H495.5" stroke="#303030" stroke-width=".9"/><path d="M440.5 287.5 v5" stroke="#202020" stroke-width="1"/><path d="M467.5 287.5 v5" stroke="#202020" stroke-width="1"/><path d="M495.5 287.5 v5" stroke="#202020" stroke-width="1"/><text x="452" y="288" font-size="3" fill="#505050">EQ</text><text x="479" y="288" font-size="3" fill="#505050">EQ</text><text x="497" y="295" font-size="2.8" fill="#505050">Height 6' 8"</text><path d="M440.5 409.5 H492" stroke="#303030" stroke-width=".9"/><line x1="492" y1="372" x2="492" y2="412" stroke="#606060" stroke-width=".9"/><text x="459" y="407.5" font-size="3" fill="#505050">Width 3' 0"</text><path d="M481 323 H492" stroke="#404040" stroke-width=".7"/><text x="482" y="322" font-size="2.6" fill="#505050">0' 2"</text><text x="456" y="341" font-size="9" fill="#5050b0">&#8645;</text><text x="473" y="340" font-size="9" fill="#5050b0">&#8644;</text><path d="M384 362 V372.0" stroke="#404040" stroke-width="1.1" stroke-dasharray="1.5 1"/><path d="M406 361 V372.5" stroke="#404040" stroke-width="1.1" stroke-dasharray="1.5 1"/><path d="M529 361 V372.5" stroke="#404040" stroke-width="1.1" stroke-dasharray="1.5 1"/><path d="M540 361 V372.5" stroke="#404040" stroke-width="1.1" stroke-dasharray="1.5 1"/><path d="M552 360 V373.0" stroke="#404040" stroke-width="1.1" stroke-dasharray="1.5 1"/><path d="M408 367 l4 -2 v3 z" fill="#202020"/><path d="M519 367 H560" stroke="#404040" stroke-width=".8"/><path d="M587 363.5 V371 L588.8 369.5 L590.3 372.3 L591.5 371.7 L590.1 369 H592.6 Z" fill="#fff" stroke="#404040" stroke-width=".8"/></svg>
<div class="a" id="status">Ready</div>
<svg class="a" style="left:542px;top:437px" width="20" height="10"><path d="M1.5 1.5h8l-3 3.5v4l-2-1v-3z" fill="#fff" stroke="#505050" stroke-width=".9"/><text x="11" y="9" font-size="6.5" fill="#202020" font-family="Liberation Sans">0</text></svg>
<div class="a" id="bottom"></div>
</body></html>
